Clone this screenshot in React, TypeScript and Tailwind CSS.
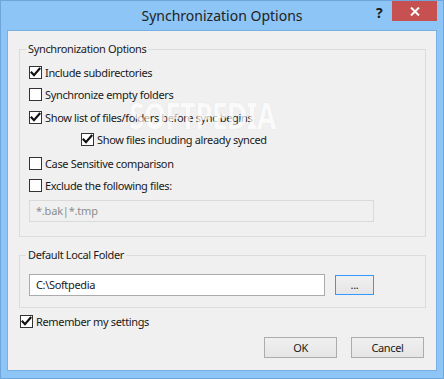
import React from "react";

const font = { fontFamily: '"Noto Sans", "Segoe UI", sans-serif' };

function Check({ checked }: { checked: boolean }) {
  return (
    <span className="relative flex h-[13px] w-[13px] shrink-0 items-center justify-center border border-[#333333] bg-white">
      {checked && (
        <svg width="11" height="11" viewBox="0 0 11 11" className="absolute left-[0px] top-[0px]">
          <path d="M1.5 5.5 L4 8.2 L9.5 1.8" fill="none" stroke="#111" strokeWidth="2.2" strokeLinecap="square" strokeLinejoin="miter" />
        </svg>
      )}
    </span>
  );
}

function Row({ checked, label, className }: { checked: boolean; label: string; className: string }) {
  return (
    <div className={`flex h-[13px] items-center ${className}`}>
      <Check checked={checked} />
      <span className="ml-[3px] whitespace-nowrap text-[11px] leading-[16px] tracking-[-0.35px] text-[#1a1a1a]">{label}</span>
    </div>
  );
}

const txt = "text-[11px] leading-[16px] tracking-[-0.35px] text-[#1a1a1a]";

export default function App() {
  return (
    <div
      className="relative flex h-[379px] w-[444px] flex-col overflow-hidden border border-[#6ea6dc] bg-[#8cc5f6]"
      style={font}
    >
      {/* title bar */}
      <div className="relative flex h-[29px] shrink-0 items-center justify-center">
        <span className="text-[14px] leading-[20px] text-[#222222]">Synchronization Options</span>
        <span className="absolute left-[375px] top-[3px] text-[14px] font-bold leading-[18px] text-[#1a1a1a]">?</span>
        <div className="absolute left-[391px] top-[0px] flex h-[20px] w-[45px] items-center justify-center bg-[#c75050]">
          <svg width="10" height="9" viewBox="0 0 10 9">
            <path d="M1 0.5 L9 8.5 M9 0.5 L1 8.5" stroke="#ffffff" strokeWidth="2" />
          </svg>
        </div>
      </div>

      {/* client area */}
      <div className="mx-[6px] mb-[7px] flex flex-1 flex-col border border-[#79b0e4] bg-[#f0f0f0]">
        <fieldset className="ml-[11px] mr-[10px] mt-[10px] border border-[#dcdcdc] pb-[14px] pl-[9px] pr-[51px]">
          <legend className={`ml-[-3px] px-[2px] ${txt}`}>Synchronization Options</legend>
          <Row checked label="Include subdirectories" className="mt-[9px]" />
          <Row checked={false} label="Synchronize empty folders" className="mt-[9px]" />
          <Row checked label="Show list of files/folders before sync begins" className="mt-[10px]" />
          <Row checked label="Show files including already synced" className="ml-[52px] mt-[9px]" />
          <Row checked={false} label="Case Sensitive comparison" className="mt-[11px]" />
          <Row checked={false} label="Exclude the following files:" className="mt-[9px]" />
          <div className="mt-[8px] flex h-[22px] items-center border border-[#dadada] bg-[#f0f0f0] px-[6px] text-[11px] leading-[16px] tracking-[-0.2px] text-[#8d8d8d]">
            *.bak|*.tmp
          </div>
        </fieldset>

        <fieldset className="ml-[11px] mr-[10px] mt-[10px] border border-[#dcdcdc] pb-[11px] pl-[9px] pr-[51px]">
          <legend className={`ml-[-3px] px-[2px] ${txt}`}>Default Local Folder</legend>
          <div className="mt-[11px] flex items-center">
            <div className={`flex h-[22px] w-[296px] items-center border border-[#ababab] bg-white px-[6px] ${txt}`}>
              C:\Softpedia
            </div>
            <div className={`ml-[10px] flex h-[20px] w-[39px] items-center justify-center border border-[#3399ff] bg-gradient-to-b from-[#f0f0f0] to-[#e5e5e5] ${txt}`}>
              ...
            </div>
          </div>
        </fieldset>

        <div className="ml-[12px] mt-[7px]">
          <Row checked label="Remember my settings" className="" />
        </div>

        <div className="mr-[12px] mt-[9px] flex justify-end gap-[14px]">
          <div className={`flex h-[21px] w-[73px] items-center justify-center border border-[#acacac] bg-gradient-to-b from-[#f0f0f0] to-[#e5e5e5] ${txt}`}>
            OK
          </div>
          <div className={`flex h-[21px] w-[73px] items-center justify-center border border-[#acacac] bg-gradient-to-b from-[#f0f0f0] to-[#e5e5e5] ${txt}`}>
            Cancel
          </div>
        </div>
      </div>

      {/* watermark */}
      <div className="pointer-events-none absolute left-[128px] top-[95px] origin-left scale-x-[0.78] select-none whitespace-nowrap text-[36px] font-bold leading-[40px] tracking-[-1px] text-white opacity-70 [text-shadow:0_0_1px_#cfcfcf]">
        SOFTPEDIA<sup className="text-[9px] font-normal">®</sup>
      </div>
    </div>
  );
}
